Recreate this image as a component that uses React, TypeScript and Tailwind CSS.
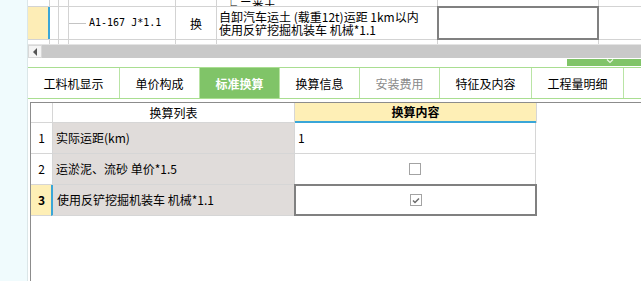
import type { ReactNode } from "react";

const tabs = [
  { label: "工料机显示", width: "w-[92px]" },
  { label: "单价构成", width: "w-[80px]" },
  { label: "标准换算", width: "w-[80px]", active: true },
  { label: "换算信息", width: "w-[80px]" },
  { label: "安装费用", width: "w-[80px]", disabled: true },
  { label: "特征及内容", width: "w-[92px]" },
  { label: "工程量明细", width: "w-[92px]" },
  { label: "工程内容", width: "w-[92px]" },
];

type Row = {
  no: number;
  name: string;
  kind: "text" | "check";
  value?: string;
  checked?: boolean;
};

const rows: Row[] = [
  { no: 1, name: "实际运距(km)", kind: "text", value: "1" },
  { no: 2, name: "运淤泥、流砂 单价*1.5", kind: "check", checked: false },
  { no: 3, name: "使用反铲挖掘机装车 机械*1.1", kind: "check", checked: true },
];

function TopCells({
  children,
  selected,
}: {
  children?: [ReactNode, ReactNode, ReactNode, ReactNode];
  selected?: boolean;
}) {
  const [code, op, desc, extra] = children ?? [null, null, null, null];
  return (
    <>
      <div
        className={
          selected
            ? "w-[22px] shrink-0 border-r-2 border-[#3aa6d8] bg-[#fdedb6]"
            : "w-[22px] shrink-0 border-r border-[#d3d3d3]"
        }
      />
      <div className="w-[9px] shrink-0 border-r border-[#d3d3d3]" />
      <div className="w-[10px] shrink-0 border-r border-[#d3d3d3]" />
      <div className="flex w-[107px] shrink-0 items-center border-r border-[#d3d3d3]">
        {code}
      </div>
      <div className="flex w-[41px] shrink-0 items-center justify-center border-r border-[#d3d3d3]">
        {op}
      </div>
      <div className="flex w-[221px] shrink-0 items-center border-r border-[#d3d3d3] pl-[2px]">
        {desc}
      </div>
      <div className="flex w-[161px] shrink-0 border-r border-[#d3d3d3]">
        {extra}
      </div>
      <div className="flex-1" />
    </>
  );
}

function CheckBox({ checked }: { checked?: boolean }) {
  return (
    <div className="flex h-[12px] w-[12px] items-center justify-center border border-[#a3a3a3] bg-white">
      {checked ? (
        <svg width="8" height="7" viewBox="0 0 8 7">
          <path d="M1 3.5 L3 5.5 L7 1.5" fill="none" stroke="#6b6b6b" strokeWidth="1.5" />
        </svg>
      ) : null}
    </div>
  );
}

export default function App() {
  return (
    <div className="flex h-[281px] w-[641px] overflow-hidden bg-white font-['Noto_Sans_CJK_SC',sans-serif] text-[12px] text-black">
      <div className="w-[28px] shrink-0 border-r border-[#dbe6e8] bg-[#f0fbfd]" />

      <div className="flex min-w-0 flex-1 flex-col">
        {/* upper list */}
        <div className="h-[44px] shrink-0 overflow-hidden">
          <div className="flex h-[7px] overflow-hidden border-b border-[#d3d3d3]">
            <TopCells>
              {[
                null,
                null,
                <div className="-mb-[6px] self-end pl-[6px] leading-[13px]" key="a">
                  └ 三类土
                </div>,
                null,
              ]}
            </TopCells>
          </div>
          <div className="flex h-[33px] border-b border-[#d3d3d3]">
            <TopCells selected>
              {[
                <div className="flex items-center" key="c">
                  <div className="h-px w-[17px] bg-[#c4c4c4]" />
                  <span className="ml-[3px] font-['DejaVu_Sans_Mono',monospace] text-[10px] leading-[12px]">
                    A1-167 J*1.1
                  </span>
                </div>,
                <span className="leading-[13px]" key="o">换</span>,
                <div className="leading-[13px]" key="d">
                  <div>自卸汽车运土 (载重12t)运距 1km以内</div>
                  <div>使用反铲挖掘机装车 机械*1.1</div>
                </div>,
                <div className="-mx-px -my-px flex-1 border-2 border-[#808080]" key="e" />,
              ]}
            </TopCells>
          </div>
          <div className="flex h-[4px] overflow-hidden">
            <TopCells>
              {[
                null,
                <div className="mt-[3px] self-start leading-[13px]" key="o">一</div>,
                <div className="mt-[3px] self-start leading-[13px]" key="d">人工挖土</div>,
                null,
              ]}
            </TopCells>
          </div>
        </div>

        {/* horizontal scrollbar */}
        <div className="flex h-[14px] shrink-0 border-t border-[#e4e4e4]">
          <div className="flex w-[14px] items-center justify-center border border-[#d8d8d8] bg-[#f4f4f4]">
            <div className="h-0 w-0 border-y-[4px] border-r-[4px] border-y-transparent border-r-[#555]" />
          </div>
          <div className="flex-1 bg-[#c9c9c9]" />
        </div>

        {/* splitter */}
        <div className="flex h-[9px] shrink-0 justify-end pt-px">
          <div className="flex h-[7px] w-[74px] items-start justify-center bg-[#80c468]">
            <svg width="8" height="5" viewBox="0 0 8 5" className="ml-[12px]">
              <path d="M1 0.5 L4 3.5 L7 0.5" fill="none" stroke="#e9f6e2" strokeWidth="1.2" />
            </svg>
          </div>
        </div>

        {/* tabs */}
        <div className="flex h-[32px] shrink-0 border-y border-[#a9de91]">
          {tabs.map((tab) => (
            <div
              key={tab.label}
              className={`flex ${tab.width} shrink-0 items-center justify-center border-r border-[#b9e4a5] pt-px leading-[14px] ${
                tab.active
                  ? "bg-[#80c468] font-bold text-white"
                  : tab.disabled
                    ? "text-[#8a8a8a]"
                    : "text-black"
              }`}
            >
              {tab.label}
            </div>
          ))}
        </div>

        {/* conversion table */}
        <div className="ml-[2px] mt-[3px] flex flex-1 flex-col border-l border-t border-[#8c8c8c]">
          <div className="flex h-[20px] shrink-0">
            <div className="w-[22px] shrink-0 border-r border-b border-[#d6d6d6]" />
            <div className="flex w-[242px] shrink-0 items-center justify-center border-r border-b border-[#d6d6d6] leading-[14px]">
              换算列表
            </div>
            <div className="flex w-[241px] shrink-0 items-center justify-center border-b-2 border-[#3aa6d8] bg-[#feefb6] font-bold leading-[14px]">
              换算内容
            </div>
            <div className="w-px shrink-0 bg-[#d6d6d6]" />
          </div>

          {rows.map((row) => {
            const current = row.no === 3;
            return (
              <div key={row.no} className="flex h-[31px] shrink-0">
                <div
                  className={`flex w-[22px] shrink-0 items-center justify-center border-r border-b border-[#d6d6d6] leading-[14px] ${
                    current ? "bg-[#feefb6] font-bold" : "bg-white"
                  }`}
                >
                  {row.no}
                </div>
                <div
                  className={`flex shrink-0 items-center border-r border-b border-[#d6d6d6] bg-[#e0dcda] leading-[14px] ${
                    current
                      ? "-ml-[2px] w-[244px] border-l-2 border-l-[#3aa6d8] pl-[4px]"
                      : "w-[242px] pl-[3px]"
                  }`}
                >
                  {row.name}
                </div>
                {current ? (
                  <div className="-mt-px -ml-px flex h-[32px] w-[243px] shrink-0 items-center justify-center border-2 border-[#808080] bg-white">
                    <CheckBox checked={row.checked} />
                  </div>
                ) : (
                  <div
                    className={`flex w-[241px] shrink-0 items-center border-r border-b border-[#d6d6d6] bg-white leading-[14px] ${
                      row.kind === "check" ? "justify-center" : "pl-[3px]"
                    }`}
                  >
                    {row.kind === "check" ? <CheckBox checked={row.checked} /> : row.value}
                  </div>
                )}
              </div>
            );
          })}
        </div>
      </div>
    </div>
  );
}
